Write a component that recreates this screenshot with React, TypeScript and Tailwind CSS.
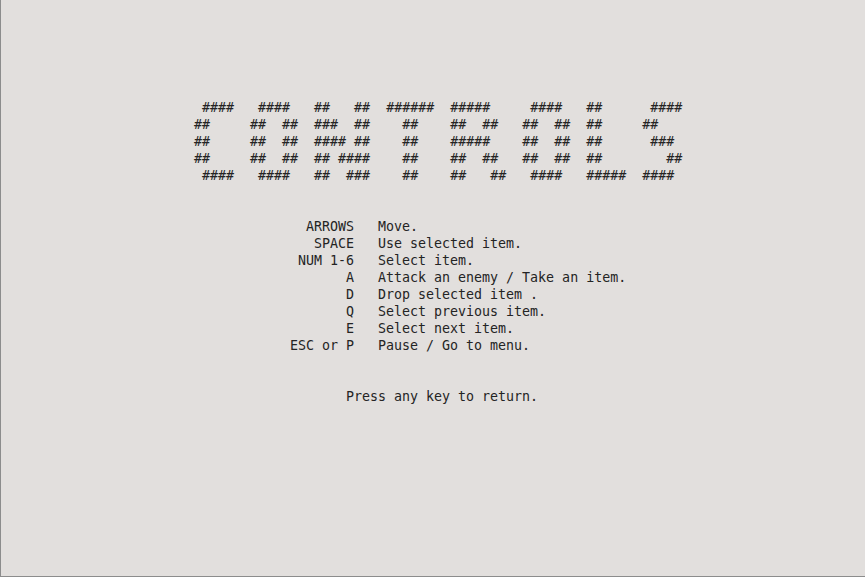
const ART = [
  ' ####   ####   ##   ##  ######  #####     ####   ##      ####',
  '##     ##  ##  ###  ##    ##    ##  ##   ##  ##  ##     ##',
  '##     ##  ##  #### ##    ##    #####    ##  ##  ##      ###',
  '##     ##  ##  ## ####    ##    ##  ##   ##  ##  ##        ##',
  ' ####   ####   ##  ###    ##    ##   ##   ####   #####  ####',
]

const KEYS: [string, string][] = [
  ['ARROWS', 'Move.'],
  ['SPACE', 'Use selected item.'],
  ['NUM 1-6', 'Select item.'],
  ['A', 'Attack an enemy / Take an item.'],
  ['D', 'Drop selected item .'],
  ['Q', 'Select previous item.'],
  ['E', 'Select next item.'],
  ['ESC or P', 'Pause / Go to menu.'],
]

export default function App() {
  return (
    <div className="h-[577px] w-full bg-[#e2dfdd] border-l border-b border-[#8c8c8c] text-[#242424] font-['DejaVu_Sans_Mono',monospace] text-[13.3px] leading-[17px]">
      <div className="pt-[99px] pl-[193px]">
        <div>
          {ART.map((line, i) => (
            <div key={i} className="whitespace-pre h-[17px]">
              {line}
            </div>
          ))}
        </div>

        <div className="mt-[34px] grid grid-cols-[160px_1fr] gap-x-[24px]">
          {KEYS.map(([k, d]) => (
            <div key={k} className="contents">
              <div className="text-right whitespace-pre h-[17px]">{k}</div>
              <div className="whitespace-pre h-[17px]">{d}</div>
            </div>
          ))}
        </div>

        <div className="mt-[34px] pl-[152px] whitespace-pre h-[17px]">
          Press any key to return.
        </div>
      </div>
    </div>
  )
}
